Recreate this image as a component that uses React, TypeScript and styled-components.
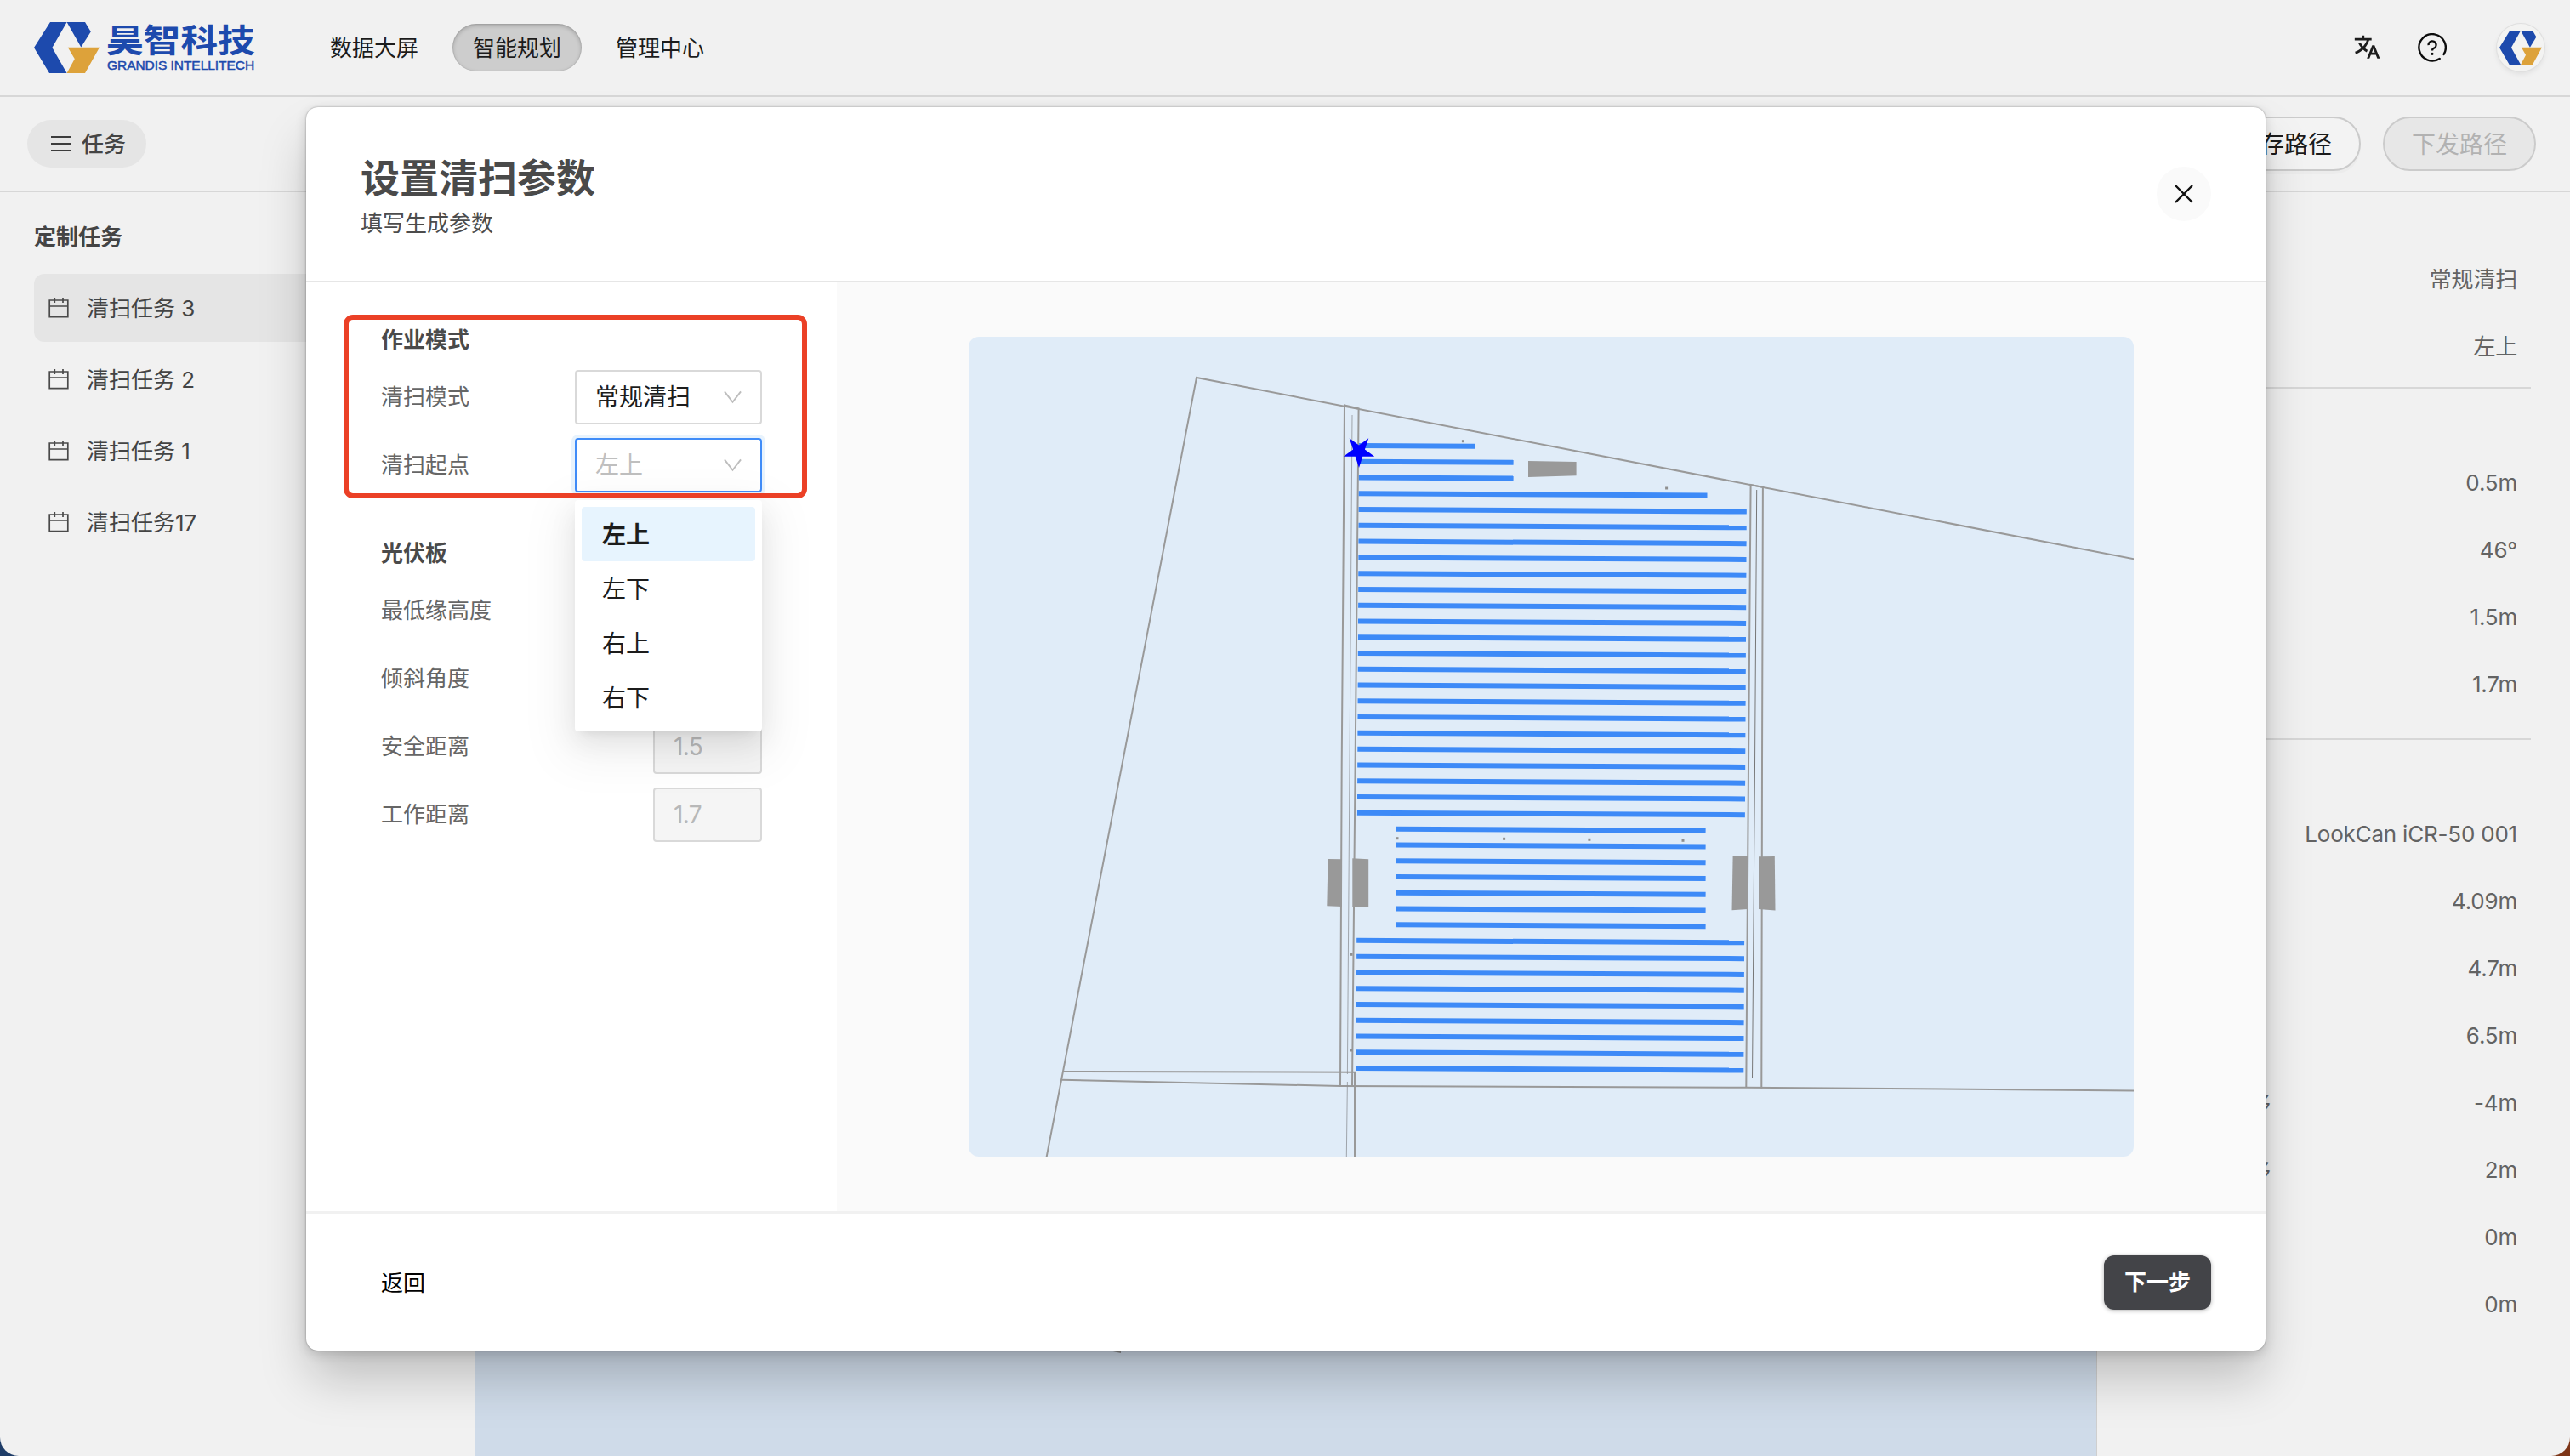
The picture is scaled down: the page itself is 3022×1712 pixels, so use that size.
import React from 'react';
import styled, { createGlobalStyle, css } from 'styled-components';
import { RiTranslate2 } from 'react-icons/ri';

const GlobalStyle = createGlobalStyle`
  *, *::before, *::after { box-sizing: border-box; }
  html, body { margin: 0; padding: 0; }
  body {
    background: linear-gradient(90deg, #1f3d68 0 50%, #7d3517 50% 100%);
    font-family: Inter, "Noto Sans CJK SC", sans-serif;
    font-size: 26px;
    line-height: 40px;
    color: #444;
    overflow: hidden;
  }
  button { font: inherit; border: 0; background: none; padding: 0; margin: 0; }
  svg { display: block; flex: none; }
`;

const Page = styled.div`
  width: 3022px;
  height: 1712px;
  display: flex;
  flex-direction: column;
  background: #f1f1f1;
  border-radius: 0 0 22px 22px;
  overflow: hidden;
`;

/* ---------- top bar ---------- */

const TopBar = styled.header`
  flex: none;
  height: 114px;
  padding: 0 30px 0 40px;
  border-bottom: 2px solid #d7d7d7;
  display: flex;
  align-items: center;
`;

const Brand = styled.div`
  display: flex;
  align-items: center;
  gap: 8px;
  width: 324px;
  color: #1d4aad;
`;

const BrandText = styled.div`
  display: flex;
  flex-direction: column;
`;

const BrandName = styled.div`
  font-size: 38px;
  line-height: 38px;
  margin-bottom: 3px;
  font-weight: 700;
  white-space: nowrap;
  transform: scaleX(1.15);
  transform-origin: left center;
`;

const BrandSub = styled.div`
  font-family: "Liberation Sans", sans-serif;
  font-size: 15.5px;
  line-height: 16px;
  padding-left: 1px;
  letter-spacing: -0.05px;
  -webkit-text-stroke: 0.5px #1d4aad;
  white-space: nowrap;
`;

const Nav = styled.nav`
  display: flex;
  gap: 16px;
`;

const NavItem = styled.button<{ $active?: boolean }>`
  height: 56px;
  padding: 2px 24px 0;
  border-radius: 28px;
  color: #1c1c1c;
  ${(p) =>
    p.$active &&
    css`
      background: #cdcdcd;
      box-shadow: inset 0 2px 5px rgba(0, 0, 0, 0.22), inset 0 0 0 1px rgba(0, 0, 0, 0.05);
    `}
`;

const Tools = styled.div`
  margin-left: auto;
  display: flex;
  align-items: center;
`;

const TranslateSlot = styled.div`
  color: #1c1c1c;
  margin-right: 43px;
`;

const Avatar = styled.div`
  width: 56px;
  height: 56px;
  margin-left: 59px;
  border-radius: 50%;
  background: #f3f3f2;
  box-shadow: 0 0 0 1px #dfdfdf, 0 3px 6px rgba(0, 0, 0, 0.08);
  display: flex;
  align-items: center;
  justify-content: center;
`;

/* ---------- action bar ---------- */

const ActionBar = styled.div`
  flex: none;
  height: 112px;
  padding: 0 40px 0 32px;
  border-bottom: 2px solid #d7d7d7;
  display: flex;
  align-items: center;
`;

const TaskButton = styled.button`
  display: flex;
  align-items: center;
  gap: 12px;
  height: 56px;
  padding: 0 24px 0 28px;
  border-radius: 28px;
  background: #e5e5e5;
  color: #444;
  font-weight: 500;
`;

/* Optical nudge so that CJK text sits on the centre line of its icon. */
const IconText = styled.span`
  padding-top: 2px;
`;

const PathActions = styled.div`
  margin-left: auto;
  display: flex;
  gap: 26px;
`;

const PathButton = styled.button<{ $disabled?: boolean }>`
  height: 64px;
  padding: 1px 32px 0;
  border: 2px solid #cbcbcb;
  border-radius: 32px;
  font-size: 28px;
  color: ${(p) => (p.$disabled ? '#b2b2b2' : '#1b1b1b')};
  background: ${(p) => (p.$disabled ? '#e7e7e7' : '#f3f3f3')};
  box-shadow: ${(p) => (p.$disabled ? 'none' : '0 4px 0 rgba(0, 0, 0, 0.02)')};
`;

/* ---------- workspace ---------- */

const Workspace = styled.div`
  flex: 1;
  min-height: 0;
  display: grid;
  grid-template-columns: 558px 1908px 1fr;
`;

const Sidebar = styled.aside`
  padding: 33px 16px 0 40px;
`;

const SidebarTitle = styled.div`
  font-weight: 600;
  margin-bottom: 23px;
`;

const TaskRow = styled.div<{ $selected?: boolean }>`
  display: flex;
  align-items: center;
  gap: 21px;
  height: 80px;
  margin-bottom: 4px;
  padding-left: 17px;
  border-radius: 12px;
  background: ${(p) => (p.$selected ? '#e5e5e5' : 'transparent')};
`;

const BaseMap = styled.div`
  border: solid #cfcfcf;
  border-width: 0 1px;
  background: #cfdbe9;
  display: flex;
`;

const Details = styled.aside`
  padding: 63px 46px 0 120px;
  color: #636363;
`;

const DetailGroup = styled.div`
  padding-right: 16px;
  display: flex;
  flex-direction: column;
`;

const DetailRow = styled.div`
  height: 79px;
  display: flex;
  align-items: center;
`;

const OffsetLabel = styled.span`
  width: 52px;
  margin-left: 32px;
  padding-top: 2px;
`;

const DetailValue = styled.span`
  margin-left: auto;
  letter-spacing: -0.2px;
`;

const Divider = styled.div<{ $top: number; $bottom: number }>`
  height: 2px;
  background: #d7d7d7;
  margin: ${(p) => p.$top}px 0 ${(p) => p.$bottom}px -120px;
`;

/* ---------- dialog ---------- */

const Overlay = styled.div`
  position: absolute;
  top: 0;
  left: 0;
  width: 3022px;
  height: 1712px;
  padding: 126px 358px 0 360px;
`;

const Dialog = styled.section`
  height: 1462px;
  display: flex;
  flex-direction: column;
  background: #fff;
  border-radius: 14px;
  overflow: clip;
  box-shadow: 0 0 2px rgba(0, 0, 0, 0.4), 0 4px 14px rgba(0, 0, 0, 0.16),
    0 36px 58px -4px rgba(0, 0, 0, 0.21);
`;

const DialogHead = styled.div`
  flex: none;
  height: 206px;
  padding: 0 64px;
  border-bottom: 2px solid #e6e6e6;
  display: flex;
  justify-content: space-between;
  align-items: center;
`;

const DialogHeading = styled.div`
  padding-top: 4px;
`;

const DialogTitle = styled.h1`
  margin: 0;
  font-size: 46px;
  line-height: 64px;
  font-weight: 600;
  color: #4a4a4a;
`;

const DialogSub = styled.div`
  margin-top: 2px;
  color: #4c4c4c;
`;

const CloseButton = styled.button`
  width: 64px;
  height: 64px;
  border-radius: 50%;
  background: #fafafa;
  display: flex;
  align-items: center;
  justify-content: center;
`;

const DialogBody = styled.div`
  flex: 1;
  min-height: 0;
  display: flex;
`;

const FormPanel = styled.div`
  width: 624px;
  padding: 48px 88px 0;
  display: flex;
  flex-direction: column;
  gap: 52px;
  position: relative;
`;

const FormSection = styled.div`
  display: flex;
  flex-direction: column;
  gap: 16px;
`;

const SectionTitle = styled.div`
  font-weight: 600;
  color: #4a4a4a;
  margin-bottom: -1px;
`;

const Field = styled.div`
  height: 64px;
  display: flex;
  align-items: center;
  justify-content: space-between;
  color: #666;
`;

const Anchor = styled.div`
  position: relative;
`;

const Select = styled.div<{ $open?: boolean }>`
  width: 220px;
  height: 64px;
  padding: 0 22px;
  display: flex;
  align-items: center;
  justify-content: space-between;
  border: 2px solid ${(p) => (p.$open ? '#408cf8' : '#d9d9d9')};
  border-radius: 4px;
  box-shadow: ${(p) => (p.$open ? '0 0 0 4px #e8f3fd' : 'none')};
  font-size: 28px;
  color: ${(p) => (p.$open ? '#bfbfbf' : '#1d1d1d')};
  background: #fff;
`;

const Menu = styled.div`
  position: absolute;
  z-index: 2;
  top: 73px;
  left: 0;
  width: 220px;
  height: 272px;
  padding: 8px;
  background: #fff;
  border-radius: 4px;
  box-shadow: 0 12px 32px rgba(0, 0, 0, 0.08), 0 6px 12px -8px rgba(0, 0, 0, 0.12),
    0 18px 56px 16px rgba(0, 0, 0, 0.05);
`;

const Option = styled.div<{ $selected?: boolean }>`
  height: 64px;
  padding: 1px 24px 0;
  display: flex;
  align-items: center;
  border-radius: 4px;
  font-size: 28px;
  color: #1c1c1c;
  font-weight: ${(p) => (p.$selected ? 600 : 400)};
  background: ${(p) => (p.$selected ? '#e7f4fe' : 'transparent')};
`;

const NumberBox = styled.div`
  width: 128px;
  height: 64px;
  padding: 0 22px;
  display: flex;
  align-items: center;
  border: 2px solid #d9d9d9;
  border-radius: 4px;
  background: #f5f5f5;
  font-size: 28px;
  letter-spacing: -0.6px;
  color: #b8b8b8;
`;

const Highlight = styled.div`
  position: absolute;
  z-index: 3;
  top: 38px;
  left: 44px;
  width: 545px;
  height: 216px;
  border: 6px solid #eb4026;
  border-radius: 11px;
  pointer-events: none;
`;

const PreviewPanel = styled.div`
  flex: 1;
  background: #fafafa;
  display: flex;
  align-items: center;
  justify-content: center;
`;

const Preview = styled.div`
  width: 1370px;
  height: 964px;
  border-radius: 12px;
  overflow: hidden;
  background: #e0ecf8;
`;

const DialogFoot = styled.div`
  flex: none;
  height: 164px;
  padding: 0 64px 0 88px;
  border-top: 4px solid #f1f1f1;
  display: flex;
  align-items: center;
  justify-content: space-between;
`;

const BackButton = styled.button`
  padding-top: 1px;
  color: #000;
`;

const NextButton = styled.button`
  height: 64px;
  padding: 0 24px;
  border-radius: 12px;
  background: #434448;
  color: #fff;
  font-weight: 600;
  box-shadow: 0 1px 5px rgba(0, 0, 0, 0.3);
`;

/* ---------- drawings ---------- */

const LogoMark = ({ width, height }: { width: number; height: number }) => (
  <svg width={width} height={height} viewBox="0 0 77 60" preserveAspectRatio="none">
    <path d="M19 0H38.6L21.4 30L38.6 60H18L0 30Z" fill="#1d4aad" />
    <path d="M38.6 0H60L66.8 11.3L55.3 29.5Z" fill="#1d4aad" />
    <path d="M39.8 29.7H77L60 60H38.6L47.8 43.3Z" fill="#dda23a" />
  </svg>
);

const HelpIcon = () => (
  <svg width="34" height="34" viewBox="0 0 34 34" fill="none" stroke="#0c0c0c" strokeWidth="2.4">
    <path d="M25.7 30A15.7 15.7 0 1 1 30.6 24.9" strokeLinecap="round" />
    <path d="M12.6 14.2A4.5 4.4 0 1 1 18.6 17.9Q17 18.6 17 20.6" />
    <circle cx="17" cy="24.3" r="1.6" fill="#0c0c0c" stroke="none" />
  </svg>
);

const ListIcon = () => (
  <svg width="24" height="20" viewBox="0 0 24 20" stroke="#3c3c3c" strokeWidth="2">
    <path d="M0 2H24M0 10H24M0 18H24" />
  </svg>
);

const CalendarIcon = () => (
  <svg width="24" height="24" viewBox="0 0 24 24" fill="none" stroke="#4a4a4a" strokeWidth="1.7">
    <path d="M1.2 3H22.8V22.6H1.2ZM1.2 10H22.8M7.3 0V6M17 0V6" />
  </svg>
);

const Chevron = () => (
  <svg width="21" height="16" viewBox="0 0 22 16" fill="none" stroke="#bdbdbd" strokeWidth="2">
    <path d="M1 1L11 14L21 1" />
  </svg>
);

const CloseIcon = () => (
  <svg width="24" height="24" viewBox="0 0 24 24" stroke="#111" strokeWidth="2.4">
    <path d="M2 2L22 22M22 2L2 22" />
  </svg>
);

type Span = { x1: number; x2: number };

const laneSpan = (k: number): Span => {
  const left = 1598 - k * 0.09;
  const right = 2054.2 - k * 0.1;
  if (k === 0) return { x1: left, x2: 1734 };
  if (k < 3) return { x1: left, x2: 1779.6 };
  if (k === 3) return { x1: left, x2: 2007.5 };
  if (k >= 24 && k <= 30) return { x1: 1641.5, x2: 2005.6 };
  return { x1: left, x2: right };
};

const lanes = Array.from({ length: 40 }, (_, k) => {
  const span = laneSpan(k);
  const y = 524 + k * 18.77;
  return {
    ...span,
    y1: y + (span.x1 - 1597) * 0.0055,
    y2: y + (span.x2 - 1597) * 0.0055,
  };
});

const starPoints = Array.from({ length: 10 }, (_, i) => {
  const r = i % 2 === 0 ? 19.2 : 7.3;
  const a = (i * Math.PI) / 5;
  return `${(1598 + r * Math.sin(a)).toFixed(1)},${(530.8 + r * Math.cos(a)).toFixed(1)}`;
}).join(' ');

const blocks = [
  '1797,542 1853.6,543 1853.6,559.3 1797,561',
  '1561.5,1010 1578,1010.3 1578,1066 1560.3,1065.3',
  '1590.3,1009.3 1609.2,1010.3 1609.2,1066.7 1590.3,1066.3',
  '2037.6,1006.5 2056,1006 2055,1069 2036.5,1070.2',
  '2068,1007.3 2086.8,1007 2087.5,1070.5 2068,1069',
];

const dots = [
  [1720.4, 518.7],
  [1959.6, 574],
  [1643, 985.7],
  [1768.6, 986.3],
  [1868.9, 987.3],
  [1979, 988.3],
  [1589, 1122.3],
  [1588.8, 1235],
];

const FieldPlan = () => (
  <svg width="1370" height="964" viewBox="1139 396 1370 964">
    <g fill="none" stroke="#999" strokeWidth="2">
      <path d="M1230.5 1361L1407 444L2510 657.5" />
      <path d="M1576 1277L1577.7 900L1581 476.5L1597.6 480.3L1593.6 900L1590 1277" />
      <path d="M2053.3 1278.7L2056 900L2058.6 570L2072.9 572.8L2072 900L2071.3 1279.5" />
      <path d="M1250.4 1260L1593 1260.7V1361" />
      <path d="M1248.6 1269.8L1576 1277L2053 1278.7L2510 1282.4" />
    </g>
    <g fill="none" stroke="#8e9297" strokeWidth="1">
      <path d="M1590 488L1587 900L1584.4 1263M1584.4 1272L1583.3 1361" opacity="0.8" />
      <path d="M2065.7 576L2063.5 900L2060.5 1268" stroke="#777" />
    </g>
    {blocks.map((points) => (
      <polygon key={points} points={points} fill="#999" />
    ))}
    {dots.map(([x, y]) => (
      <rect key={`${x}-${y}`} x={x - 1.5} y={y - 1.5} width="3" height="3" fill="#8f8f8f" />
    ))}
    <g stroke="#3d8af7" strokeWidth="6">
      {lanes.map((l) => (
        <line key={l.y1} x1={l.x1} y1={l.y1} x2={l.x2} y2={l.y2} />
      ))}
    </g>
    <polygon points={starPoints} fill="#00f" />
  </svg>
);

type Detail = { label?: string; value: string };

const tasks = ['清扫任务 3', '清扫任务 2', '清扫任务 1', '清扫任务17'];

const detailGroups: Detail[][] = [
  [{ value: '常规清扫' }, { value: '左上' }],
  [{ value: '0.5m' }, { value: '46°' }, { value: '1.5m' }, { value: '1.7m' }],
  [
    { value: 'LookCan iCR-50 001' },
    { value: '4.09m' },
    { value: '4.7m' },
    { value: '6.5m' },
    { label: '偏移', value: '-4m' },
    { label: '偏移', value: '2m' },
    { value: '0m' },
    { value: '0m' },
  ],
];

const DetailRows = ({ rows }: { rows: Detail[] }) => (
  <DetailGroup>
    {rows.map((r, i) => (
      <DetailRow key={i}>
        {r.label && <OffsetLabel>{r.label}</OffsetLabel>}
        <DetailValue>{r.value}</DetailValue>
      </DetailRow>
    ))}
  </DetailGroup>
);

export default function App() {
  return (
    <>
      <GlobalStyle />
      <Page>
        <TopBar>
          <Brand>
            <LogoMark width={77} height={60} />
            <BrandText>
              <BrandName>昊智科技</BrandName>
              <BrandSub>GRANDIS INTELLITECH</BrandSub>
            </BrandText>
          </Brand>
          <Nav>
            <NavItem>数据大屏</NavItem>
            <NavItem $active>智能规划</NavItem>
            <NavItem>管理中心</NavItem>
          </Nav>
          <Tools>
            <TranslateSlot>
              <RiTranslate2 size={34} />
            </TranslateSlot>
            <HelpIcon />
            <Avatar>
              <LogoMark width={50} height={40} />
            </Avatar>
          </Tools>
        </TopBar>

        <ActionBar>
          <TaskButton>
            <ListIcon />
            <IconText>任务</IconText>
          </TaskButton>
          <PathActions>
            <PathButton>保存路径</PathButton>
            <PathButton $disabled>下发路径</PathButton>
          </PathActions>
        </ActionBar>

        <Workspace>
          <Sidebar>
            <SidebarTitle>定制任务</SidebarTitle>
            {tasks.map((t, i) => (
              <TaskRow key={t} $selected={i === 0}>
                <CalendarIcon />
                <IconText>{t}</IconText>
              </TaskRow>
            ))}
          </Sidebar>
          <BaseMap>
            <svg width="1906" height="1486" viewBox="559 226 1906 1486">
              <path d="M1290 1585L1318 1586V1591Z" fill="#8c8c8c" />
            </svg>
          </BaseMap>
          <Details>
            <DetailRows rows={detailGroups[0]} />
            <Divider $top={8} $bottom={71} />
            <DetailRows rows={detailGroups[1]} />
            <Divider $top={24} $bottom={71} />
            <DetailRows rows={detailGroups[2]} />
          </Details>
        </Workspace>
      </Page>

      <Overlay>
        <Dialog>
          <DialogHead>
            <DialogHeading>
              <DialogTitle>设置清扫参数</DialogTitle>
              <DialogSub>填写生成参数</DialogSub>
            </DialogHeading>
            <CloseButton>
              <CloseIcon />
            </CloseButton>
          </DialogHead>
          <DialogBody>
            <FormPanel>
              <FormSection>
                <SectionTitle>作业模式</SectionTitle>
                <Field>
                  清扫模式
                  <Select>
                    常规清扫
                    <Chevron />
                  </Select>
                </Field>
                <Field>
                  清扫起点
                  <Anchor>
                    <Select $open>
                      左上
                      <Chevron />
                    </Select>
                    <Menu>
                      <Option $selected>左上</Option>
                      <Option>左下</Option>
                      <Option>右上</Option>
                      <Option>右下</Option>
                    </Menu>
                  </Anchor>
                </Field>
              </FormSection>
              <FormSection>
                <SectionTitle>光伏板</SectionTitle>
                <Field>最低缘高度</Field>
                <Field>倾斜角度</Field>
                <Field>
                  安全距离
                  <NumberBox>1.5</NumberBox>
                </Field>
                <Field>
                  工作距离
                  <NumberBox>1.7</NumberBox>
                </Field>
              </FormSection>
              <Highlight />
            </FormPanel>
            <PreviewPanel>
              <Preview>
                <FieldPlan />
              </Preview>
            </PreviewPanel>
          </DialogBody>
          <DialogFoot>
            <BackButton>返回</BackButton>
            <NextButton>下一步</NextButton>
          </DialogFoot>
        </Dialog>
      </Overlay>
    </>
  );
}
